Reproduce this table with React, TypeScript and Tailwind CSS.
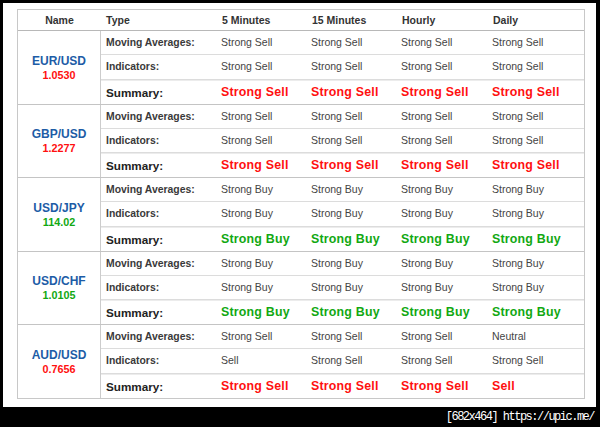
import React from 'react';

type Signal = 'Strong Sell' | 'Sell' | 'Neutral' | 'Buy' | 'Strong Buy';

interface Pair {
  name: string;
  price: string;
  up: boolean;
  ma: Signal[];
  ind: Signal[];
  sum: Signal[];
  h: string;
}

const SS: Signal = 'Strong Sell';
const SB: Signal = 'Strong Buy';

const pairs: Pair[] = [
  { name: 'EUR/USD', price: '1.0530', up: false, ma: [SS, SS, SS, SS], ind: [SS, SS, SS, SS], sum: [SS, SS, SS, SS], h: 'h-[73px]' },
  { name: 'GBP/USD', price: '1.2277', up: false, ma: [SS, SS, SS, SS], ind: [SS, SS, SS, SS], sum: [SS, SS, SS, SS], h: 'h-[72px]' },
  { name: 'USD/JPY', price: '114.02', up: true, ma: [SB, SB, SB, SB], ind: [SB, SB, SB, SB], sum: [SB, SB, SB, SB], h: 'h-[73px]' },
  { name: 'USD/CHF', price: '1.0105', up: true, ma: [SB, SB, SB, SB], ind: [SB, SB, SB, SB], sum: [SB, SB, SB, SB], h: 'h-[72px]' },
  { name: 'AUD/USD', price: '0.7656', up: false, ma: [SS, SS, SS, 'Neutral'], ind: ['Sell', SS, SS, SS], sum: [SS, SS, SS, 'Sell'], h: 'h-[73px]' },
];

const colW = ['w-[90px]', 'w-[90px]', 'w-[91px]', 'flex-1'];

const sumColor = (s: Signal) => (s.includes('Buy') ? 'text-[#12a812]' : s.includes('Sell') ? 'text-[#ff1010]' : 'text-[#333]');

function Row({ label, values, summary, last }: { label: string; values: Signal[]; summary?: boolean; last?: boolean }) {
  return (
    <div className={`flex flex-1 items-center ${last ? '' : 'border-b border-[#dcdcdc]'} ${summary ? 'border-t border-t-[#ececec]' : ''}`}>
      <div className={`w-[115px] pl-[5px] ${summary ? 'text-[11.7px] font-bold text-[#222]' : 'text-[10.4px] font-bold text-[#3a3a3a]'}`}>{label}</div>
      {values.map((v, i) => (
        <div key={i} className={`${colW[i]} pl-[5px] ${summary ? `text-[12.4px] font-bold tracking-[0.2px] ${sumColor(v)}` : 'text-[10.5px] text-[#444]'}`}>
          {v}
        </div>
      ))}
    </div>
  );
}

export default function App() {
  return (
    <div className="w-[600px] h-[427px] bg-black flex flex-col font-['Liberation_Sans',Arial,sans-serif]">
      <div className="ml-[3px] mr-[4px] mt-[3px] h-[404px] bg-white pt-[6px] pl-[14px]">
        <div className="w-[568px] border border-[#c8c8c8]">
          <div className="flex h-[21px] items-center pt-[1px] border-b border-[#b8b8b8] text-[10.5px] font-bold text-[#333]">
            <div className="w-[83px] text-center">Name</div>
            <div className="w-[116px] pl-[5px]">Type</div>
            <div className="w-[90px] pl-[5px]">5 Minutes</div>
            <div className="w-[90px] pl-[5px]">15 Minutes</div>
            <div className="w-[91px] pl-[5px]">Hourly</div>
            <div className="flex-1 pl-[5px]">Daily</div>
          </div>
          {pairs.map((p, gi) => (
            <div key={p.name} className={`flex ${gi < pairs.length - 1 ? 'border-b border-[#c4c4c4]' : ''}`}>
              <div className={`w-[83px] ${p.h} border-r border-[#cccccc] flex flex-col items-center justify-center leading-[14px]`}>
                <div className="text-[12px] font-bold text-[#1d5ca6]">{p.name}</div>
                <div className={`text-[10.8px] font-bold ${p.up ? 'text-[#12a812]' : 'text-[#ff1010]'}`}>{p.price}</div>
              </div>
              <div className={`flex-1 ${p.h} flex flex-col`}>
                <Row label="Moving Averages:" values={p.ma} />
                <Row label="Indicators:" values={p.ind} />
                <Row label="Summary:" values={p.sum} summary last />
              </div>
            </div>
          ))}
        </div>
      </div>
      <div className="flex-1 flex items-center justify-end pr-[6px] pb-[1px]">
        <span className="text-white text-[12px] tracking-[-1.5px] font-['Liberation_Mono',monospace]">[682x464] https://upic.me/</span>
      </div>
    </div>
  );
}
